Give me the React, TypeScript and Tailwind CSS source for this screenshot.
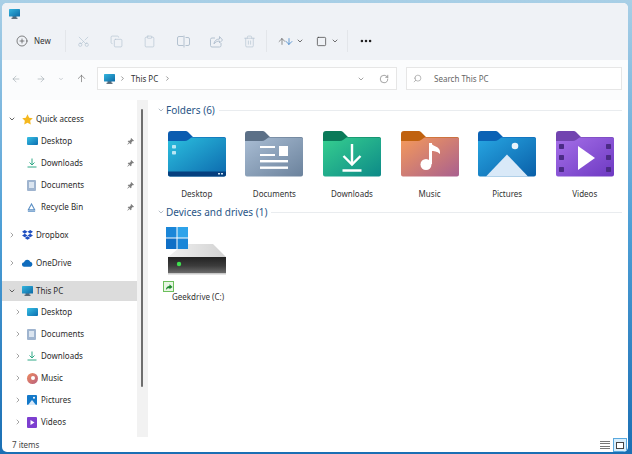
import React from 'react';
import {
  ArrowDown, ArrowLeft, ArrowRight, ArrowUp, ChevronDown, ChevronRight, Clipboard, Copy, Ellipsis,
  PlusCircle, RotateCw, Scissors, Search, Square, Trash2,
} from 'lucide-react';

function Monitor({ className = 'w-[11px] h-[10px]' }: { className?: string }) {
  return (
    <svg viewBox="0 0 11 10" className={className}>
      <defs>
        <linearGradient id="mon" x1="0" y1="0" x2="1" y2="1">
          <stop offset="0" stopColor="#35b5de" />
          <stop offset="1" stopColor="#0c6aa6" />
        </linearGradient>
      </defs>
      <rect x="3.5" y="7" width="4" height="2" fill="#5b6f80" />
      <rect x="0" y="0" width="11" height="7.6" rx="0.6" fill="url(#mon)" />
      <rect x="2.5" y="8.8" width="6" height="1" fill="#3f5160" />
    </svg>
  );
}

function Folder({ id, back, from, to, children }: { id: string; back: string; from: string; to: string; children?: React.ReactNode }) {
  return (
    <svg viewBox="0 0 58 46" className="w-[58px] h-[46px]">
      <defs>
        <linearGradient id={id} x1="0" y1="0" x2="1" y2="1">
          <stop offset="0" stopColor={from} />
          <stop offset="1" stopColor={to} />
        </linearGradient>
      </defs>
      <path d="M0 3a3 3 0 0 1 3-3h14a4 4 0 0 1 3 1l5 5h31a2 2 0 0 1 2 2v6H0z" fill={back} />
      <path d="M0 10h17a5 5 0 0 0 3-1l3.500-2.500H56a2 2 0 0 1 2 2V43.500a2 2 0 0 1-2 2H2a2 2 0 0 1-2-2z" fill={`url(#${id})`} />
      {children}
    </svg>
  );
}

const folders = [
  {
    name: 'Desktop', back: '#0b5cb0', from: '#2cc0df', to: '#0c68ad',
    art: (
      <g>
        <rect x="4" y="14" width="4" height="3.500" rx="0.8" fill="#b9e6f4" />
        <rect x="4" y="20" width="4" height="3.500" rx="0.8" fill="#b9e6f4" />
        <path d="M0 40.500h58v3a2 2 0 0 1-2 2H2a2 2 0 0 1-2-2z" fill="#06407f" />
        <rect x="50" y="42" width="2" height="1.500" fill="#cfe6f5" />
        <rect x="53" y="42" width="2" height="1.500" fill="#cfe6f5" />
      </g>
    ),
  },
  {
    name: 'Documents', back: '#5c7087', from: '#a9bdd4', to: '#6b829c',
    art: (
      <g fill="#fff">
        <rect x="15" y="15" width="15" height="2" />
        <rect x="15" y="23" width="15" height="2" />
        <rect x="34" y="15" width="9" height="10" />
        <rect x="15" y="29" width="28" height="2.400" />
        <rect x="15" y="35.500" width="28" height="2.400" />
      </g>
    ),
  },
  {
    name: 'Downloads', back: '#0a7a59', from: '#36cf8f', to: '#0d8a88',
    art: (
      <g stroke="#fff" fill="none" strokeWidth="2.400">
        <path d="M29 13v20" />
        <path d="M20.500 25l8.500 8.500l8.500-8.500" />
        <path d="M19.500 39.500h19" />
      </g>
    ),
  },
  {
    name: 'Music', back: '#c0620f', from: '#f59a5a', to: '#a9608f',
    art: (
      <g fill="#fff">
        <circle cx="25" cy="33.500" r="5.500" />
        <rect x="28" y="12" width="3" height="21" />
        <path d="M30 12c2 4 9 3 9 9v2c-3-3-6-3-9-3z" />
      </g>
    ),
  },
  {
    name: 'Pictures', back: '#0b62b5', from: '#27a6e2', to: '#0a5fa8',
    art: (
      <g>
        <circle cx="37" cy="15" r="3.300" fill="#e8f4fb" />
        <path d="M8 45.500L29 23.500L50 45.500z" fill="#d9e9f8" />
      </g>
    ),
  },
  {
    name: 'Videos', back: '#7244b0', from: '#a56fe8', to: '#6d39c2',
    art: (
      <g>
        <g fill="#4b2b86">
          <rect x="3" y="13" width="5" height="5" rx="0.8" />
          <rect x="3" y="24" width="5" height="5" rx="0.8" />
          <rect x="3" y="36" width="5" height="5" rx="0.8" />
          <rect x="50" y="13" width="5" height="5" rx="0.8" />
          <rect x="50" y="24" width="5" height="5" rx="0.8" />
          <rect x="50" y="36" width="5" height="5" rx="0.8" />
        </g>
        <path d="M22 15l17 12l-17 12z" fill="#fff" />
      </g>
    ),
  },
];

function SmallDesktop() {
  return <div className="w-[11px] h-[8px] rounded-[1px] bg-gradient-to-br from-[#38c0e4] to-[#0c6eb0]" />;
}
function SmallDownload() {
  return (
    <svg viewBox="0 0 10 10" className="w-[10px] h-[10px]" fill="none" stroke="#2fa886" strokeWidth="1">
      <path d="M5 0.500v6.500M2.500 4.500L5 7L7.500 4.500" />
      <path d="M0.500 9h9" />
    </svg>
  );
}
function SmallDoc() {
  return (
    <div className="w-[9px] h-[11px] rounded-[1px] bg-[#9fb4cf] flex items-center justify-center">
      <div className="w-[5px] h-[6px] bg-[#dbe5f0]" />
    </div>
  );
}
function SmallBin() {
  return (
    <svg viewBox="0 0 10 10" className="w-[9px] h-[9px]" fill="none" stroke="#5b8fc4" strokeWidth="1.200">
      <path d="M5 1L1.500 7.500h7z" />
      <path d="M1 9h8" />
    </svg>
  );
}
function Star() {
  return (
    <svg viewBox="0 0 10 10" className="w-[11px] h-[11px]">
      <path d="M5 0.300l1.500 3.100l3.300 0.400l-2.400 2.300l0.600 3.400L5 8l-3 1.500l0.600-3.400L0.200 3.800l3.300-0.400z" fill="#f5b81f" />
    </svg>
  );
}
function Dropbox() {
  return (
    <svg viewBox="0 0 12 11" className="w-[11px] h-[10px]" fill="#1f4fc0">
      <path d="M3 0L6 2L3 4L0 2z" />
      <path d="M9 0L12 2L9 4L6 2z" />
      <path d="M3 4L6 6L3 8L0 6z" />
      <path d="M9 4L12 6L9 8L6 6z" />
      <path d="M3 8.800L6 6.800L9 8.800L6 10.800z" />
    </svg>
  );
}
function Cloud() {
  return (
    <svg viewBox="0 0 12 8" className="w-[11px] h-[8px]">
      <path d="M2.500 8a2.400 2.400 0 0 1-0.300-4.800a3.600 3.600 0 0 1 6.800-0.600a2.800 2.800 0 0 1 0.500 5.400z" fill="#0f6cbd" />
    </svg>
  );
}
function SmallMusic() {
  return (
    <div className="w-[11px] h-[11px] rounded-full bg-gradient-to-br from-[#ee8a5c] to-[#b9607c] flex items-center justify-center">
      <div className="w-[4px] h-[4px] rounded-full bg-white" />
    </div>
  );
}
function SmallPictures() {
  return (
    <svg viewBox="0 0 10 10" className="w-[10px] h-[10px]">
      <rect width="10" height="10" rx="1" fill="#1479c9" />
      <path d="M1 10L5 5L9 10z" fill="#d9e9f8" />
      <circle cx="7" cy="2.800" r="1" fill="#fff" />
    </svg>
  );
}
function SmallVideos() {
  return (
    <svg viewBox="0 0 10 11" className="w-[10px] h-[11px]">
      <rect width="10" height="11" rx="1" fill="#7d3fd0" />
      <path d="M3.500 3l4 2.500l-4 2.500z" fill="#fff" />
    </svg>
  );
}
function Pin() {
  return (
    <svg viewBox="0 0 8 8" className="w-[7px] h-[7px]" fill="#7f7f7f">
      <path d="M4.800 0L8 3.200L7.200 3.800L6.500 3.500L5 5L5 6.800L4.300 7.200L0.800 3.700L1.200 3L3 3L4.500 1.500L4.200 0.800z" />
      <path d="M2 5.200L0 8L2.800 6z" />
    </svg>
  );
}

function Row({ label, icon, level, arrow, pin }: { label: string; icon: React.ReactNode; level: 0 | 1; arrow?: 'open' | 'closed'; pin?: boolean }) {
  return (
    <div className={`h-[22px] flex items-center ${level === 0 ? 'pl-[6px]' : 'pl-[12px]'}`}>
      <div className={`h-full flex items-center shrink-0 ${level === 0 ? 'w-[14px]' : 'w-[13px]'}`}>
        {arrow === 'open' && <ChevronDown className="w-[8px] h-[8px] text-[#444]" strokeWidth={2.500} />}
        {arrow === 'closed' && <ChevronRight className="w-[8px] h-[8px] text-[#777]" strokeWidth={2} />}
      </div>
      <div className="w-[14px] flex items-center shrink-0">{icon}</div>
      <span>{label}</span>
      {pin && <div className="ml-auto pr-[3px]"><Pin /></div>}
    </div>
  );
}

function ToolIcon({ children }: { children: React.ReactNode }) {
  return <div className="w-[33.200px] flex justify-center text-[#b4c2d0]">{children}</div>;
}

const ti = 'w-[13px] h-[13px]';

export default function App() {
  return (
    <div className="w-[632px] h-[454px] overflow-hidden bg-gradient-to-b from-[#a8cfe6] via-[#4d9fd6] to-[#1a6fb4] pl-[2px] pr-[4px] pt-[3px] pb-[2px] text-[8px] text-[#222] font-['Noto_Sans','Open_Sans',sans-serif]">
      <div className="w-full h-full rounded-[5px] overflow-hidden bg-white flex flex-col">
        {/* title bar */}
        <div className="h-[22px] shrink-0 bg-[#eff2f6] flex items-center pl-[7px]">
          <Monitor />
        </div>

        {/* command bar */}
        <div className="h-[35px] shrink-0 bg-[#eff2f6] flex items-center pb-[3px]">
          <div className="w-[63px] flex items-center pl-[14px] shrink-0">
            <PlusCircle className="w-[12px] h-[12px] text-[#444]" strokeWidth={1.300} />
            <span className="ml-[6px] text-[#333]">New</span>
          </div>
          <div className="w-px h-[22px] bg-[#e3e6ea] mr-[1px]" />
          <ToolIcon><Scissors className={`${ti} -rotate-90`} strokeWidth={1.200} /></ToolIcon>
          <ToolIcon><Copy className={ti} strokeWidth={1.200} /></ToolIcon>
          <ToolIcon><Clipboard className={ti} strokeWidth={1.200} /></ToolIcon>
          <ToolIcon>
            <svg viewBox="0 0 13 13" className={ti} fill="none" stroke="currentColor" strokeWidth="1">
              <path d="M6.500 1.500H2a1.500 1.500 0 0 0-1.500 1.500v6A1.500 1.500 0 0 0 2 10.500h4.500" />
              <path d="M8.500 2.500H11a1.500 1.500 0 0 1 1.500 1.500v5A1.500 1.500 0 0 1 11 10.500H8.500" />
              <path d="M7 0.500V12.500" />
            </svg>
          </ToolIcon>
          <ToolIcon>
            <svg viewBox="0 0 13 13" className={ti} fill="none" stroke="currentColor" strokeWidth="1">
              <path d="M5 3H2a1.500 1.500 0 0 0-1.500 1.500v6A1.500 1.500 0 0 0 2 12h7.500A1.500 1.500 0 0 0 11 10.500V8" />
              <path d="M4 9c0-3 2.500-5 5.500-5V1.500l3 3.500l-3 3V6C7.500 6 5 7 4 9z" />
            </svg>
          </ToolIcon>
          <ToolIcon><Trash2 className={ti} strokeWidth={1.200} /></ToolIcon>
          <div className="w-px h-[22px] bg-[#e3e6ea]" />
          <div className="flex items-center ml-[10px]">
            <ArrowUp className="w-[10px] h-[13px] text-[#444] -mr-[3px]" strokeWidth={1.400} />
            <ArrowDown className="w-[10px] h-[13px] text-[#1f6fc0]" strokeWidth={1.600} />
            <ChevronDown className="w-[8px] h-[8px] text-[#555] ml-[2px]" strokeWidth={2.500} />
          </div>
          <Square className="w-[11px] h-[11px] text-[#444] ml-[12px]" strokeWidth={1.600} />
          <ChevronDown className="w-[8px] h-[8px] text-[#555] ml-[4px]" strokeWidth={2.500} />
          <div className="w-px h-[22px] bg-[#e3e6ea] ml-[8px]" />
          <Ellipsis className="w-[14px] h-[14px] text-[#222] ml-[11px]" strokeWidth={2.400} />
        </div>

        {/* address row */}
        <div className="h-[40px] shrink-0 bg-[#fbfcfd] flex items-center pb-[3px]">
          <div className="w-[95px] flex items-center shrink-0 text-[#9aa3ab]">
            <ArrowLeft className="w-[10px] h-[10px] ml-[9px]" strokeWidth={1.400} />
            <ArrowRight className="w-[10px] h-[10px] ml-[15px]" strokeWidth={1.400} />
            <ChevronDown className="w-[6px] h-[6px] ml-[12px]" strokeWidth={2} />
            <ArrowUp className="w-[11px] h-[11px] ml-[12px] text-[#666]" strokeWidth={1.400} />
          </div>
          <div className="w-[300px] h-[23px] bg-white border border-[#e6e6e6] flex items-center pl-[6px] pr-[7px] shrink-0">
            <Monitor />
            <ChevronRight className="w-[7px] h-[7px] ml-[4px] text-[#555]" strokeWidth={2} />
            <span className="ml-[5px] text-[#333]">This PC</span>
            <ChevronRight className="w-[7px] h-[7px] ml-[6px] text-[#555]" strokeWidth={2} />
            <ChevronDown className="w-[8px] h-[8px] ml-auto text-[#777]" strokeWidth={2} />
            <RotateCw className="w-[10px] h-[10px] ml-[14px] text-[#666]" strokeWidth={1.400} />
          </div>
          <div className="w-[216px] h-[23px] ml-[9px] bg-white border border-[#e6e6e6] flex items-center pl-[6px] shrink-0">
            <Search className="w-[9px] h-[9px] text-[#888] -scale-x-100" strokeWidth={1.500} />
            <span className="ml-[12px] text-[#666]">Search This PC</span>
          </div>
        </div>

        {/* main */}
        <div className="flex-1 min-h-0 flex">
          <div className="w-[135px] shrink-0 pt-[8px] text-[#2b2b2b]">
            <Row label="Quick access" level={0} arrow="open" icon={<Star />} />
            <Row label="Desktop" level={1} pin icon={<SmallDesktop />} />
            <Row label="Downloads" level={1} pin icon={<SmallDownload />} />
            <Row label="Documents" level={1} pin icon={<SmallDoc />} />
            <Row label="Recycle Bin" level={1} pin icon={<SmallBin />} />
            <div className="mt-[6px]"><Row label="Dropbox" level={0} arrow="closed" icon={<Dropbox />} /></div>
            <div className="mt-[6px]"><Row label="OneDrive" level={0} arrow="closed" icon={<Cloud />} /></div>
            <div className="mt-[7px] h-[20px] bg-[#dcdcdc] flex items-center">
              <div className="w-full">
                <Row label="This PC" level={0} arrow="open" icon={<Monitor />} />
              </div>
            </div>
            <Row label="Desktop" level={1} arrow="closed" icon={<SmallDesktop />} />
            <Row label="Documents" level={1} arrow="closed" icon={<SmallDoc />} />
            <Row label="Downloads" level={1} arrow="closed" icon={<SmallDownload />} />
            <Row label="Music" level={1} arrow="closed" icon={<SmallMusic />} />
            <Row label="Pictures" level={1} arrow="closed" icon={<SmallPictures />} />
            <Row label="Videos" level={1} arrow="closed" icon={<SmallVideos />} />
          </div>

          {/* sidebar scrollbar */}
          <div className="w-[11px] shrink-0 bg-[#f2f2f2] pl-[4px] pt-[9px] mb-[1px]">
            <div className="w-[2px] h-[278px] rounded-full bg-[#6e6e6e]" />
          </div>

          {/* content */}
          <div className="flex-1 min-w-0 pt-[3px] pl-[10px] pr-[6px]">
            <div className="h-[14px] flex items-center text-[10px] text-[#2a5687]">
              <ChevronDown className="w-[8px] h-[8px] text-[#6b7d90] mr-[1px] -ml-[1px]" strokeWidth={1.500} />
              <span>Folders (6)</span>
              <div className="flex-1 h-px bg-[#e9ecef] ml-[4px]" />
            </div>
            <div className="mt-[14px] grid grid-cols-[repeat(6,77.6px)]">
              {folders.map((f) => (
                <div key={f.name} className="flex flex-col items-center">
                  <Folder id={`f-${f.name}`} back={f.back} from={f.from} to={f.to}>{f.art}</Folder>
                  <span className="mt-[10px] h-[14px] leading-[14px] text-[#333]">{f.name}</span>
                </div>
              ))}
            </div>
            <div className="mt-[4px] h-[14px] flex items-center text-[10px] text-[#2a5687]">
              <ChevronDown className="w-[8px] h-[8px] text-[#6b7d90] mr-[1px] -ml-[1px]" strokeWidth={1.500} />
              <span>Devices and drives (1)</span>
              <div className="flex-1 h-px bg-[#e9ecef] ml-[4px]" />
            </div>
            <div className="mt-[8px] w-[64px] ml-[8px]">
              <svg viewBox="0 0 62 50" className="w-[62px] h-[50px]">
                <defs>
                  <linearGradient id="driveTop" x1="0" y1="0" x2="1" y2="0">
                    <stop offset="0" stopColor="#f0f0f0" />
                    <stop offset="1" stopColor="#d2d2d2" />
                  </linearGradient>
                  <linearGradient id="driveFront" x1="0" y1="0" x2="0" y2="1">
                    <stop offset="0" stopColor="#222" />
                    <stop offset="0.550" stopColor="#3c3c3c" />
                    <stop offset="1" stopColor="#6b6b6b" />
                  </linearGradient>
                </defs>
                <path d="M2 30L18 17H47L60 30z" fill="url(#driveTop)" />
                <rect x="2" y="30" width="58" height="16" fill="url(#driveFront)" />
                <rect x="2" y="46" width="58" height="1.500" fill="#c9c9c9" />
                <circle cx="13" cy="37" r="2.200" fill="#3fe04f" />
                <rect x="0" y="0" width="10.500" height="10.500" fill="#1a86d8" />
                <rect x="11.500" y="0" width="10.500" height="10.500" fill="#2ea3ea" />
                <rect x="0" y="11.500" width="10.500" height="10.500" fill="#0f6fc6" />
                <rect x="11.500" y="11.500" width="10.500" height="10.500" fill="#1a86d8" />
              </svg>
              <div className="mt-[4px] -ml-[3px] w-[11px] h-[11px] bg-[#e8f6e4] border border-[#6cbf5c] flex items-center justify-center">
                <svg viewBox="0 0 9 9" className="w-[8px] h-[8px]">
                  <path d="M1 8C1 5 3 3.500 5 3.500V1.500L8.500 4.500L5 7V5.500C3.500 5.500 2 6.500 1 8z" fill="#1e8a2e" />
                </svg>
              </div>
              <div className="-mt-[2px] ml-[6px] w-[70px] whitespace-nowrap h-[14px] leading-[14px] text-[#333]">Geekdrive (C:)</div>
            </div>
          </div>
        </div>

        {/* status bar */}
        <div className="h-[14px] shrink-0 flex items-center pl-[10px] pr-[1px] text-[#444]">
          <span>7 items</span>
          <div className="ml-auto flex items-center">
            <div className="w-[10px] h-[8px] flex flex-col justify-between mr-[3px]">
              <div className="h-px bg-[#777]" />
              <div className="h-px bg-[#777]" />
              <div className="h-px bg-[#777]" />
              <div className="h-px bg-[#777]" />
            </div>
            <div className="w-[14px] h-[14px] bg-[#d9eefc] border border-[#5aa9de] flex items-center justify-center">
              <div className="w-[8px] h-[7px] bg-white border border-[#444]" />
            </div>
          </div>
        </div>
      </div>
    </div>
  );
}
